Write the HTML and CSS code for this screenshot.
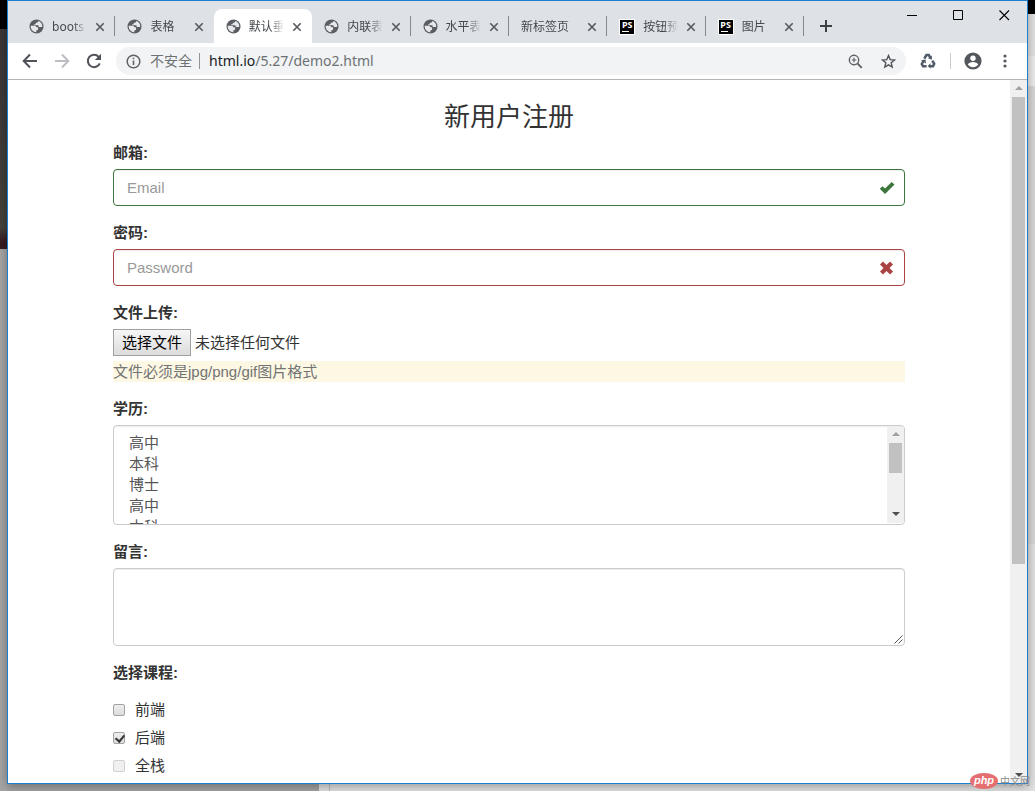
FILE: index.html
```html
<!DOCTYPE html>
<html lang="zh-CN">
<head>
<meta charset="utf-8">
<title>默认垂直表单</title>
<link rel="stylesheet" href="styles.css">
</head>
<body>
<svg class="defs" aria-hidden="true">
  <symbol id="globe" viewBox="0 0 16 16">
    <circle cx="8" cy="8" r="7.500" fill="#5a5e63"/>
    <path d="M1.800 7.200h4c1.500 0 2 .8 2 1.700h1.900v2c0 .9-.9 1.100-1.900 1.200v2C4.300 14 1.600 11.200 1.800 7.200zM10 2.200c-.2 1.500-1 1.900-2.800 1.900v1.500H5.600v1.100h3.700c.9 0 1.100.5 1.100 1.700h3.700C14.500 5.500 12.600 3 10 2.200z" fill="#e6e8eb"/>
  </symbol>
  <symbol id="x" viewBox="0 0 10 10"><path d="M1.300 1.300l7.400 7.400M8.700 1.300L1.300 8.700" stroke="#55585c" stroke-width="1.600"/></symbol>
</svg>
<div class="window">
  <header class="strip">
    <nav class="tabs" aria-label="标签页">
      <div class="tab"><svg class="fav"><use href="#globe"/></svg><span class="name">boots</span><button class="close" aria-label="关闭"><svg><use href="#x"/></svg></button></div>
      <div class="tab bare"><svg class="fav"><use href="#globe"/></svg><span class="name">表格</span><button class="close" aria-label="关闭"><svg><use href="#x"/></svg></button></div>
      <div class="tab active"><svg class="fav"><use href="#globe"/></svg><span class="name">默认垂</span><button class="close" aria-label="关闭"><svg><use href="#x"/></svg></button></div>
      <div class="tab"><svg class="fav"><use href="#globe"/></svg><span class="name">内联表</span><button class="close" aria-label="关闭"><svg><use href="#x"/></svg></button></div>
      <div class="tab"><svg class="fav"><use href="#globe"/></svg><span class="name">水平表</span><button class="close" aria-label="关闭"><svg><use href="#x"/></svg></button></div>
      <div class="tab"><span class="name">新标签页</span><button class="close" aria-label="关闭"><svg><use href="#x"/></svg></button></div>
      <div class="tab"><span class="ps">PS</span><span class="name">按钮预</span><button class="close" aria-label="关闭"><svg><use href="#x"/></svg></button></div>
      <div class="tab"><span class="ps">PS</span><span class="name">图片</span><button class="close" aria-label="关闭"><svg><use href="#x"/></svg></button></div>
    </nav>
    <button class="plus" aria-label="新标签页"><svg viewBox="0 0 12 12"><path d="M6 0v12M0 6h12" stroke="#3c4043" stroke-width="2"/></svg></button>
    <div class="controls">
      <button aria-label="最小化"><svg viewBox="0 0 11 11"><path d="M0 5.500h10" stroke="#000"/></svg></button>
      <button aria-label="最大化"><svg viewBox="0 0 11 11"><path d="M.5.5h9v9h-9z" stroke="#000" fill="none"/></svg></button>
      <button aria-label="关闭窗口"><svg viewBox="0 0 11 11"><path d="M.5.5l9.500 9.500M10 .5L.5 10" stroke="#000" stroke-width="1.100"/></svg></button>
    </div>
  </header>

  <div class="toolbar">
    <button class="nav" aria-label="后退"><svg viewBox="0 0 16 16"><path d="M15 8H2M8 1.500L1.700 8 8 14.500" stroke="#50545a" stroke-width="2" fill="none"/></svg></button>
    <button class="nav" aria-label="前进" disabled><svg viewBox="0 0 16 16"><path d="M1 8h13M8 1.500L14.300 8 8 14.500" stroke="#bcbec1" stroke-width="2" fill="none"/></svg></button>
    <button class="nav" aria-label="重新加载"><svg viewBox="0 0 16 16"><path d="M13.800 10.300A6.200 6.200 0 1 1 12.700 3.800" stroke="#50545a" stroke-width="2" fill="none"/><path d="M15 .8v6.200H8.800z" fill="#50545a"/></svg></button>
    <div class="address">
      <svg class="info" viewBox="0 0 15 15"><circle cx="7.500" cy="7.500" r="6.300" stroke="#5f6368" stroke-width="1.500" fill="none"/><path d="M7.500 6.500V11M7.500 3.700v1.600" stroke="#5f6368" stroke-width="1.600"/></svg>
      <span class="unsafe">不安全</span>
      <span class="url"><b>html.io</b>/5.27/demo2.html</span>
      <svg class="zoomer" viewBox="0 0 15 15"><circle cx="6" cy="6" r="4.700" stroke="#5f6368" stroke-width="1.400" fill="none"/><path d="M9.500 9.500l4.300 4.300" stroke="#5f6368" stroke-width="1.800"/><path d="M6 3.700v4.600M3.700 6h4.600" stroke="#5f6368" stroke-width="1.200"/></svg>
      <svg class="star" viewBox="0 0 15 15"><path d="M7.500 1.600l1.700 4 4.300.4-3.300 2.800 1 4.300-3.700-2.300-3.700 2.300 1-4.300L1.500 6l4.300-.4z" stroke="#50545a" stroke-width="1.400" fill="none"/></svg>
    </div>
    <svg class="recycle" viewBox="0 0 16 16"><g fill="none" stroke="#505a69" stroke-width="2.500"><path d="M4.300 5.600L6.400 2h2.400l1.400 2.400M12.300 7.600l1.900 3.300-1.200 2.300h-3.200M6.600 13.200H3L1.800 11l1.700-3"/></g><path d="M11.900 2.500v4.300L8 5.200zM10.500 10.300v5.300L7.700 13zM1 7.300l4.500-.8.500 4z" fill="#505a69"/></svg>
    <i class="sep"></i>
    <svg class="user" viewBox="0 0 18 18"><circle cx="9" cy="9" r="8.600" fill="#54585e"/><circle cx="9" cy="6.200" r="2.700" fill="#fff"/><path d="M3.800 12.600c.4-1.700 3-2.700 5.200-2.700s4.800 1 5.200 2.700C13 14.300 11.200 15.200 9 15.200s-4-.9-5.200-2.600z" fill="#fff"/></svg>
    <button class="menu" aria-label="菜单"><svg viewBox="0 0 4 14"><g fill="#54585e"><circle cx="2" cy="2" r="1.600"/><circle cx="2" cy="7" r="1.600"/><circle cx="2" cy="12" r="1.600"/></g></svg></button>
  </div>

  <div class="view">
    <main class="page">
      <form class="form">
        <h1>新用户注册</h1>
        <div class="group">
          <label for="email">邮箱:</label>
          <div class="field">
            <input class="control ok" id="email" type="email" placeholder="Email">
            <svg class="mark" viewBox="0 0 16 16"><path d="M.8 8.700l2.700-2.500 2.500 2.400 6.700-6.500 2.800 2.500L6 14z" fill="#3c763d"/></svg>
          </div>
        </div>
        <div class="group">
          <label for="password">密码:</label>
          <div class="field">
            <input class="control bad" id="password" type="password" placeholder="Password">
            <svg class="mark" viewBox="0 0 16 16"><path d="M4 1.500l3.500 3.500L11 1.500l3 3L10.500 8l3.500 3.500-3 3L7.500 11 4 14.500l-3-3L4.500 8 1 4.500z" fill="#a94442"/></svg>
          </div>
        </div>
        <div class="group">
          <label for="file">文件上传:</label>
          <div class="file">
            <button type="button">选择文件</button><span>未选择任何文件</span>
            <input id="file" type="file" tabindex="-1">
          </div>
          <p class="help">文件必须是jpg/png/gif图片格式</p>
        </div>
        <div class="group">
          <label for="degree">学历:</label>
          <div class="field">
            <select class="control list" id="degree" multiple>
              <option>高中</option><option>本科</option><option>博士</option>
              <option>高中</option><option>本科</option><option>博士</option>
              <option>高中</option><option>本科</option><option>博士</option>
            </select>
            <div class="bar inner"><i class="up"></i><i class="thumb"></i><i class="down"></i></div>
          </div>
        </div>
        <div class="group">
          <label for="message">留言:</label>
          <div class="field">
            <textarea class="control area" id="message"></textarea>
            <svg class="grip" viewBox="0 0 9 9"><path d="M.5 8.500l8-8M4.500 8.500l4-4" stroke="#555" stroke-width="1"/></svg>
          </div>
        </div>
        <fieldset class="group">
          <legend>选择课程:</legend>
          <div class="checks">
            <label class="check"><input type="checkbox">前端</label>
            <label class="check"><input type="checkbox" checked>后端</label>
            <label class="check"><input type="checkbox" disabled>全栈</label>
          </div>
        </fieldset>
      </form>
    </main>
    <div class="bar outer"><i class="up"></i><i class="thumb"></i><i class="down"></i></div>
  </div>
</div>
<div class="brand"><span class="oval">php</span><span class="cn">中文网</span></div>
</body>
</html>
```
FILE: styles.css
```css
* { box-sizing: border-box; }
body {
  margin: 0;
  height: 100vh;
  overflow: hidden;
  padding: 0 7px 7px;
  font-family: "Liberation Sans", "Noto Sans CJK SC", sans-serif;
  font-size: 15px;
  line-height: 21px;
  color: #333;
  background:
    linear-gradient(#000 0 29px, #3c3737 29px, #403b3a 130px, #45433b 228px, #3a1a22 242px 249px, #a6a6a6 249px) left top / 7px 100% no-repeat,
    linear-gradient(#000 0 14px, #e4e4e4 14px 56px, #eee 56px 86px, #d8d8d8 86px 544px, #e2e2e2 544px) right top / 7px 100% no-repeat,
    linear-gradient(90deg, #a3a3a3 0 319px, #e2e2e2 319px 329px, #bbb 329px 330px, #e2e2e2 330px);
}
button { font: inherit; border: 0; padding: 0; background: none; color: inherit; }
button, svg { flex: none; }
svg { display: block; }
.defs { position: absolute; width: 0; height: 0; }

.window {
  height: 100%;
  display: flex;
  flex-direction: column;
  background: #fff;
  border: 1px solid #1a7fd0;
  box-shadow: 0 2px 10px rgba(0, 0, 0, .35);
}

/* tab strip */
.strip { display: flex; height: 42px; padding-left: 9px; background: #dee1e6; }
.tabs { display: flex; flex: 0 1 787px; min-width: 0; padding-top: 8px; font: 12px/16px "Noto Sans", "Noto Sans CJK SC", sans-serif; color: #45494d; }
.tab { position: relative; display: flex; flex: 1 1 0; min-width: 0; align-items: center; gap: 8px; padding: 1px 10px 0 12px; }
.tab::after { content: ""; position: absolute; right: 0; top: 7px; width: 1px; height: 20px; background: #85888d; }
.bare::after, .active::after { display: none; }
.active { background: #fff; border-radius: 8px 8px 0 0; }
.fav { width: 15px; height: 15px; }
.name { flex: 1; min-width: 0; overflow: hidden; white-space: nowrap; -webkit-mask: linear-gradient(90deg, #000 calc(100% - 14px), transparent); mask: linear-gradient(90deg, #000 calc(100% - 14px), transparent); }
.close svg { width: 10px; height: 10px; }
.ps { width: 16px; height: 16px; border: 1px solid #fff; background: #000; color: #fff; font: bold 9px/10px "Noto Sans", sans-serif; text-align: center; }
.ps::after { content: ""; display: block; width: 7px; height: 1px; margin: 1px 0 0 2px; background: #fff; }
.plus { padding: 7px 0 0 16px; }
.plus svg { width: 12px; height: 12px; }
.controls { display: flex; align-items: flex-start; margin-left: auto; }
.controls button { width: 46px; height: 29px; display: grid; place-items: center; }
.controls svg { width: 11px; height: 11px; }

/* toolbar */
.toolbar { display: flex; align-items: center; height: 37px; padding: 0 20px 0 14px; border-bottom: 1px solid #b4b4b6; }
.nav { width: 16px; margin-right: 16px; }
.nav svg { width: 16px; height: 16px; }
.address { display: flex; flex: 1; min-width: 0; align-items: center; height: 28px; margin-left: -2px; padding: 0 10px; border-radius: 14px; background: #f1f3f4; font: 14px/20px "Noto Sans", "Noto Sans CJK SC", sans-serif; color: #6d7175; margin-right: 14px; }
.info, .zoomer, .star { width: 15px; height: 15px; }
.unsafe { padding: 0 7px 0 9px; line-height: 16px; border-right: 1px solid #909397; }
.url { flex: 1; padding-left: 9px; }
.url b { font-weight: 400; color: #202124; }
.star { margin-left: 18px; }
.recycle { width: 16px; height: 16px; }
.sep { width: 1px; height: 16px; margin: 0 13px 0 14px; background: #c9ccd0; }
.user { width: 18px; height: 18px; margin-right: 21px; }
.menu svg { width: 4px; height: 14px; }

/* page */
.view { display: flex; flex: 1; min-height: 0; overflow: hidden; }
.page { flex: 1; min-width: 0; overflow: hidden; }
.form { max-width: 792px; margin: 0 auto; padding-top: 23px; }
h1 { margin: 0 0 10px; font-size: 26px; line-height: 29px; font-weight: 400; text-align: center; }
.group { margin: 0 0 16px; padding: 0; border: 0; }
.group > label, legend { display: block; padding: 0; margin-bottom: 6px; font-weight: 700; }
.field { position: relative; }
.control {
  display: block;
  width: 100%;
  height: 37px;
  margin: 0;
  padding: 7px 13px;
  border: 1px solid #ccc;
  border-radius: 4px;
  background: #fff;
  box-shadow: inset 0 1px 1px rgba(0, 0, 0, .075);
  font: inherit;
  color: #555;
  outline: 0;
}
.control::placeholder { color: #999; }
.ok { border-color: #3c763d; }
.bad { border-color: #a94442; }
.mark { position: absolute; right: 10px; top: 11px; width: 16px; height: 16px; }
.file { display: flex; align-items: center; gap: 4px; height: 27px; margin-bottom: 5px; }
.file button { height: 27px; padding: 0 8px; border: 1px solid #a0a0a0; background: linear-gradient(#f6f6f6, #dcdcdc); color: #000; }
.file input { position: absolute; width: 1px; height: 1px; opacity: 0; }
.help { margin: 0; background: #fcf8e3; color: #737373; }
.list { height: 100px; padding-top: 5px; overflow: hidden; }
.list option { height: 21px; min-height: 21px; padding: 0 2px; line-height: 21px; }
.area { height: 78px; resize: none; }
.grip { position: absolute; right: 2px; bottom: 2px; width: 9px; height: 9px; }
.checks { display: flex; flex-direction: column; gap: 7px; padding-top: 10px; }
.check { display: flex; align-items: center; gap: 10px; }
.check input { appearance: none; width: 12px; height: 12px; margin: 0; border: 1px solid #a3a3a3; border-radius: 2px; background: linear-gradient(#eee, #dcdcdc); }
.check input:checked::after { content: ""; display: block; width: 4px; height: 7px; margin: 0 0 0 3px; border: solid #333; border-width: 0 2px 2px 0; transform: rotate(40deg); }
.check input:disabled { border-color: #d0d0d0; background: #f0f0f0; }

/* scroll bars */
.bar { display: flex; flex-direction: column; align-items: center; width: 17px; background: #f0f0f0; }
.inner { position: absolute; top: 2px; right: 1px; bottom: 2px; }
.up, .down { border: 4px solid transparent; }
.up { margin: 2px 0 5px; border-bottom-color: #a0a0a0; }
.down { margin: auto 0 2px; border-top-color: #505050; }
.inner .up { margin: 1px 0 5px; }
.inner .down { margin-bottom: 3px; }
.thumb { width: 13px; background: #c1c1c1; }
.inner .thumb { height: 30px; margin-top: 2px; }
.outer .thumb { height: 467px; margin-top: 2px; }

.brand { position: absolute; right: 5px; bottom: 2px; display: flex; align-items: center; gap: 2px; }
.oval { width: 28px; height: 16px; border-radius: 50%; background: #e56f70; color: #fff; font: italic bold 11px/14px "Liberation Sans", sans-serif; text-align: center; }
.cn { font: 10px/14px "Noto Sans CJK SC", sans-serif; color: #8a8a8a; }
```
